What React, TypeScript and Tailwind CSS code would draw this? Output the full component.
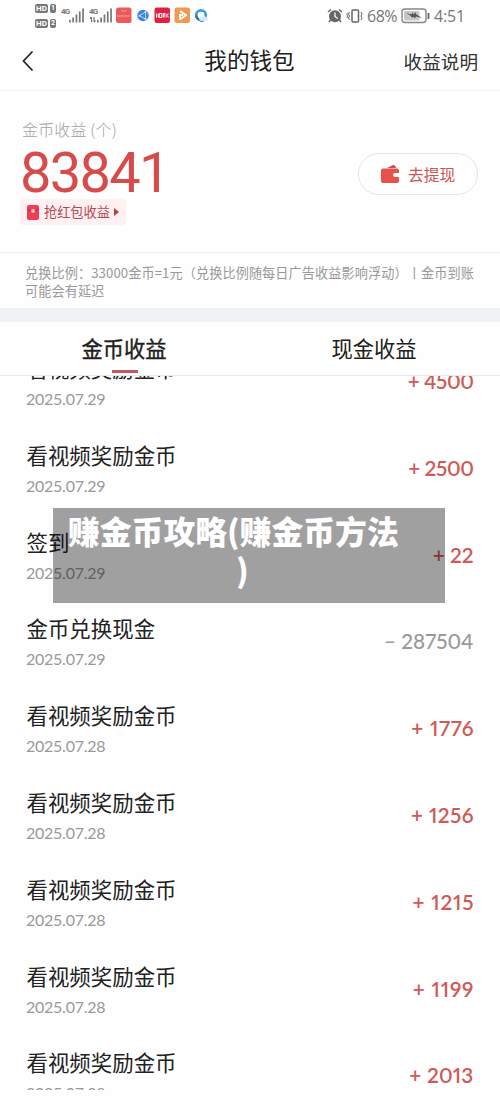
const records = [
  { title: "看视频奖励金币", date: "2025.07.29", amount: "+ 4500", tracking: "tracking-[-0.4px]" },
  { title: "看视频奖励金币", date: "2025.07.29", amount: "+ 2500", tracking: "tracking-[-0.4px]" },
  { title: "签到", date: "2025.07.29", amount: "+ 22", tracking: "" },
  { title: "金币兑换现金", date: "2025.07.29", amount: "– 287504", tracking: "", spent: true },
  { title: "看视频奖励金币", date: "2025.07.28", amount: "+ 1776", tracking: "tracking-[0.7px] -mr-[0.7px]" },
  { title: "看视频奖励金币", date: "2025.07.28", amount: "+ 1256", tracking: "tracking-[0.4px] -mr-[0.4px]" },
  { title: "看视频奖励金币", date: "2025.07.28", amount: "+ 1215", tracking: "tracking-[0.8px] -mr-[0.8px]" },
  { title: "看视频奖励金币", date: "2025.07.28", amount: "+ 1199", tracking: "tracking-[0.8px] -mr-[0.8px]" },
  { title: "看视频奖励金币", date: "2025.07.28", amount: "+ 2013", tracking: "tracking-[0.2px]" },
];

function HdBadge({ sim }: { sim: string }) {
  return (
    <div className="flex gap-[2px] text-[8px] font-bold leading-[9px] text-white">
      <span className="flex h-[9px] w-[13px] items-center justify-center rounded-[2px] bg-[#777]">HD</span>
      <span className="flex h-[9px] w-[6px] items-center justify-center rounded-[2px] bg-[#777] text-[7px]">{sim}</span>
    </div>
  );
}

function Signal({ data }: { data?: boolean }) {
  return (
    <div className="relative h-[18px] w-[24px]">
      <span className="absolute left-0 top-0 text-[8px] font-bold leading-[9px] tracking-[-0.9px] text-[#777]">4G</span>
      <svg className="absolute inset-0" width="24" height="18" viewBox="0 0 24 18" fill="#777">
        <rect x="8" y="13" width="1.7" height="2.5" />
        <rect x="11.3" y="10.5" width="1.7" height="5" />
        <rect x="14.6" y="7.5" width="1.7" height="8" />
        <rect x="17.9" y="4.5" width="1.7" height="11" />
        <rect x="21.2" y="1.5" width="1.7" height="14" />
        {data && <path d="M2.5 10v5M1 11.5 2.5 10M5 10v5M5 15l1.5-1.5" stroke="#777" strokeWidth="1.2" fill="none" />}
      </svg>
    </div>
  );
}

function AppIcons() {
  return (
    <svg className="-mt-px ml-[-1px]" width="98" height="18" viewBox="0 0 98 18">
      <rect x="0" y="1.5" width="15.5" height="15.5" rx="2.5" fill="#ea5a58" />
      <path d="M5.3 4.2q2.4 3 4.8 0" stroke="#f8aaa5" fill="none" />
      <path d="M1.5 10h12.5" stroke="#f7a29d" strokeWidth="1.7" strokeDasharray="1.2 .5" />
      <circle cx="27" cy="9.5" r="5.7" fill="#3f82db" />
      <path d="m23.3 9.7 6.3-3.7v7L23.3 9.7" stroke="#b9d7f7" fill="none" />
      <circle cx="23.5" cy="9.7" r="1" fill="#d9eaff" />
      <circle cx="29.5" cy="6.1" r="1" fill="#d9eaff" />
      <circle cx="29.5" cy="13" r="1" fill="#d9eaff" />
      <rect x="38.5" y="1.5" width="15.5" height="15.5" rx="2.5" fill="#df2144" />
      <path d="M40.5 7.5v4m1.8-4v4m1-4h2.5v4h-2.5v-4m4 0v4m0-4h1.6v4m2-4v4m2-4-2 2 2 2" stroke="#fff" fill="none" />
      <rect x="58.5" y="1.5" width="15.5" height="15.5" rx="2.5" fill="#f09a51" />
      <path d="m64 5 6.3 4.2-6.3 4V8.5l3.2.9" fill="none" stroke="#fff" strokeWidth="1.7" strokeLinejoin="round" />
      <circle cx="85" cy="9.2" r="4.8" stroke="#439bdc" strokeWidth="2.7" fill="#fff" />
      <path d="M80.3 9.5q.8 5.2 7.2 5.5" stroke="#2e6fb8" strokeWidth="2" fill="none" />
      <path d="M84.5 14.8q-2-.3-1.3-2.2.8-1.8 2.4-1 1.4-2.8 4-.9 1.5-.1 2.2 1.8.2 2.2-2 2.4Z" fill="#d5eaf9" />
    </svg>
  );
}

function StatusBar() {
  return (
    <div className="flex h-[33px] items-start justify-between pl-[35px] pr-[34px] font-['Roboto',sans-serif]">
      <div className="flex">
        <div className="flex flex-col gap-[6px] pt-[4px]">
          <HdBadge sim="1" />
          <HdBadge sim="2" />
        </div>
        <div className="ml-[5px] flex gap-[4px] pt-[7px]">
          <Signal />
          <Signal data />
          <AppIcons />
        </div>
      </div>
      <div className="flex h-[32px] items-center text-[16px] text-[#777]">
        <svg width="16" height="16" viewBox="0 0 16 16">
          <path d="m1 4 3-2.5M15 4l-3-2.5M3.5 12 2 14m10.5-2 1.5 2" stroke="#666" strokeWidth="1.5" />
          <circle cx="8" cy="8.3" r="6" fill="#666" />
          <path d="M8 4.5v4l2.7 2" stroke="#fff" strokeWidth="1.3" fill="none" />
        </svg>
        <svg className="ml-[3px]" width="19" height="16" viewBox="0 0 19 16" fill="none" stroke="#666">
          <rect x="6" y="2" width="6.5" height="12" rx="1" strokeWidth="1.5" />
          <path d="m3.5 4-1 2 1 2-1 2 1 2M1.5 5l-.5 1.5L1.5 8 1 10M15 4l1 2-1 2 1 2-1 2" />
        </svg>
        <span className="ml-[2px] w-[31px] whitespace-nowrap font-['Open_Sans',sans-serif] text-[16px] tracking-[-0.5px]">68%</span>
        <svg className="ml-[3px]" width="29" height="16" viewBox="0 0 29 16">
          <rect x="1" y="1" width="24" height="13.5" rx="3" stroke="#858585" strokeWidth="1.4" fill="#fff" />
          <rect x="3" y="3" width="15.5" height="9.5" rx="1" fill="#c7c7c7" />
          <path d="m5 5 5.5 1.5.8-2 1.7 2L14 4l1.5 2.5L21 10l-6-1.5-1 1.8-2-1.5-1 1-1.5-2Z" fill="#555" />
          <path d="M27.5 5v6" stroke="#666" strokeWidth="1.8" />
        </svg>
        <span className="ml-[4px] w-[32px] whitespace-nowrap font-['Open_Sans',sans-serif] text-[16px] leading-5 tracking-[-0.2px]">4:51</span>
      </div>
    </div>
  );
}

function NavBar() {
  return (
    <header className="grid h-[58px] grid-cols-[1fr_auto_1fr] items-center border-b border-[#f3f3f3] pl-[21px] pr-[22px] text-[#202020]">
      <svg className="-mt-[2px]" width="14" height="22" viewBox="0 0 14 22" fill="none" stroke="#292929" strokeWidth="1.8">
        <path d="m11.5 1.5-9 9.5 9 9.5" />
      </svg>
      <h1 className="pb-[4px] text-[22.6px] leading-8">我的钱包</h1>
      <span className="justify-self-end pb-[2px] text-[18.6px] leading-7 text-[#333]">收益说明</span>
    </header>
  );
}

function Balance() {
  return (
    <section className="flex h-[162px] items-start justify-between border-b border-[#ededed] pl-[22px] pr-[22px]">
      <div className="flex flex-col items-start pt-[27px]">
        <p className="whitespace-nowrap text-[16px] font-light leading-[22px] tracking-[0.15px] text-[#a2a2a2]">金币收益 (个)</p>
        <p className="-ml-[2px] mt-[6px] h-[53px] font-['Roboto',sans-serif] text-[56px] leading-[55px] tracking-[-1.7px] text-[#d84b4b]">83841</p>
        <div className="-ml-[2px] flex h-[26px] w-[106px] items-center rounded-[4px] bg-[#fff1f1] pl-[7px] text-[#b94752]">
          <svg width="12" height="15" viewBox="0 0 12 15">
            <rect width="12" height="15" rx="2" fill="#ed3d59" />
            <path d="M0 4q6 4 12 0" stroke="#c52445" fill="none" />
            <circle cx="6" cy="6" r="2" fill="#ffc4a9" />
          </svg>
          <span className="ml-[5px] whitespace-nowrap text-[13.2px] leading-5">抢红包收益</span>
          <svg className="ml-[4px]" width="5" height="8" viewBox="0 0 5 8"><path d="M0 0v8l5-4Z" fill="#b93f4d" /></svg>
        </div>
      </div>
      <button className="mt-[62px] flex h-[42px] w-[120px] items-center rounded-full border border-[#e6e6e6] pl-[22px] text-[#ce5555]">
        <svg width="19" height="20" viewBox="0 0 19 20">
          <path d="m6 4 6-3q1.2-.4 2 .8L15.3 4Z" fill="#c95350" />
          <path d="M2 4.5h14q2 0 2 2V9h-4q-2 0-2 2t2 2H18v4q0 2-2 2H2q-2 0-2-2V6.5q0-2 2-2Z" fill="#e9504b" />
        </svg>
        <span className="ml-[8px] pt-px text-[15.8px] leading-6">去提现</span>
      </button>
    </section>
  );
}

function Tabs() {
  return (
    <div className="grid h-[54px] grid-cols-2 border-b border-[#e9e9e9] text-center text-[21.3px] leading-[52px] text-[#202020]">
      <div className="flex flex-col items-center">
        <span className="-ml-[2px] h-[48px] [-webkit-text-stroke:0.35px_#202020]">金币收益</span>
        <span className="h-[3px] w-[26px] bg-[#c4585c]" />
      </div>
      <div className="pr-[2px]">现金收益</div>
    </div>
  );
}

function Records() {
  return (
    <div className="h-[714px] overflow-hidden">
      <ul className="-mt-[22px]">
        {records.map((r, i) => (
          <li key={i} className="flex h-[86.8px] justify-between pl-[26px] pr-[26.5px]">
            <div>
              <p className="pl-[0.5px] text-[21.45px] leading-[28px] text-[#222]">{r.title}</p>
              <p className="mt-[6px] font-['Lato',sans-serif] text-[16px] leading-[22px] tracking-[-0.25px] text-[#999]">{r.date}</p>
            </div>
            <p className={`mt-[13px] font-['Lato',sans-serif] text-[20.7px] leading-[28px] proportional-nums ${r.tracking} ${r.spent ? "font-medium text-[#999]" : "font-semibold text-[#cf5a57]"}`}>
              {r.amount}
            </p>
          </li>
        ))}
      </ul>
    </div>
  );
}

export default function App() {
  return (
    <main className="relative h-[1111px] w-[500px] overflow-hidden bg-[#fefefe] font-['Noto_Sans_CJK_SC',sans-serif]">
      <StatusBar />
      <NavBar />
      <Balance />
      <p className="h-[55px] whitespace-nowrap pl-[25px] pt-[11px] text-[13.15px] leading-[17.5px] tracking-[0.1px] text-[#999]">
        兑换比例：33000金币=1元（兑换比例随每日广告收益影响浮动）丨金币到账
        <br />
        可能会有延迟
      </p>
      <div className="h-[14px] bg-[#f1f2f4]" />
      <Tabs />
      <Records />
      <div className="absolute left-[53px] top-[508px] h-[95px] w-[392px] bg-black/37 pl-[15px] pt-[2px] text-[31.8px] font-black leading-[41px] text-white">
        <p className="whitespace-nowrap">赚金币攻略(赚金币方法</p>
        <p className="-mt-[2px] pl-[168px]">)</p>
      </div>
    </main>
  );
}
